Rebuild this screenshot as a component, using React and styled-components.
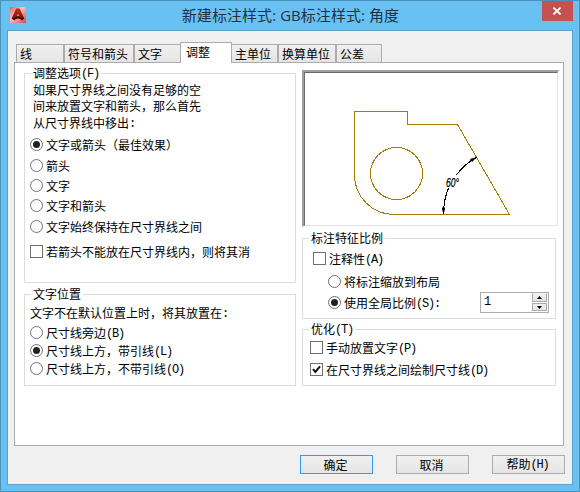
import React, { useState } from "react";
import styled, { createGlobalStyle, css } from "styled-components";

const GlobalStyle = createGlobalStyle`
  * { box-sizing: border-box; }
  body { margin: 0; overflow: hidden; }
`;

const Window = styled.div`
  width: 580px;
  height: 492px;
  display: flex;
  flex-direction: column;
  padding: 0 6px 6px;
  background: #69c0f2;
  border: 1px solid #4b92bb;
  color: #000;
  font: 12px/13px "Noto Sans CJK SC", sans-serif;
`;

const TitleBar = styled.header`
  height: 29px;
  flex: none;
  display: flex;
  align-items: flex-start;
  justify-content: space-between;
`;

const AppIcon = styled.svg`
  width: 16px;
  height: 16px;
  margin: 6px 0 0 3px;
`;

const Title = styled.h1`
  margin: 0 0 0 13px;
  padding-top: 3px;
  font: 15px/22px "Open Sans", "Noto Sans CJK SC", sans-serif;
  letter-spacing: 0.06px;
  color: #25323a;
  white-space: pre;
`;

const CloseButton = styled.button`
  width: 31px;
  height: 20px;
  padding: 0;
  border: 0;
  display: grid;
  place-items: center;
  background: #c75050;
`;

const Client = styled.main`
  height: 455px;
  flex: none;
  background: #f0f0f0;
  border: 1px solid #58a2cd;
`;

const TabRow = styled.nav`
  height: 31px;
  padding: 11px 0 0 8px;
  display: flex;
  align-items: flex-end;
`;

const Tab = styled.button`
  width: ${(p) => p.$width}px;
  height: 18px;
  padding: 0 0 1px 3px;
  border: 1px solid #acacac;
  border-bottom: 0;
  background: linear-gradient(#f0f0f0, #e5e5e5);
  font: inherit;
  color: #000;
  text-align: left;
  white-space: nowrap;
  ${(p) =>
    p.$active &&
    css`
      position: relative;
      height: 21px;
      margin: 0 -1px -1px;
      padding: 0 0 4px 5px;
      background: #fff;
    `}
`;

const TabPanel = styled.div`
  width: 550px;
  height: 384px;
  margin-left: 6px;
  padding: 0 0 0 9px;
  display: flex;
  gap: 6px;
  background: #fff;
  border: 1px solid #acacac;
`;

const Column = styled.div`
  width: ${(p) => p.$width}px;
  padding-top: ${(p) => p.$top}px;
  display: flex;
  flex-direction: column;
`;

const Group = styled.section`
  height: ${(p) => p.$height}px;
  width: ${(p) => p.$width}px;
  margin-top: ${(p) => p.$gap || 0}px;
  padding-left: 5px;
  border: 1px solid #dcdcdc;
`;

const Legend = styled.div`
  width: fit-content;
  height: 13px;
  margin: -7px 0 0 1px;
  padding: 0 2px;
  background: #fff;
  line-height: 11px;
  white-space: nowrap;
`;

const Line = styled.div`
  height: 13px;
  margin: ${(p) => p.$gap}px 0 0 ${(p) => p.$indent || 0}px;
  line-height: 11px;
  white-space: nowrap;
`;

const Option = styled.label`
  height: ${(p) => p.$height || 13}px;
  margin: ${(p) => p.$gap}px 0 0 ${(p) => p.$indent || 0}px;
  display: flex;
  align-items: center;
  gap: 3px;
  white-space: nowrap;
`;

const Latin = styled.span`
  font-family: "Liberation Mono", monospace;
  font-size: 12px;
  line-height: 1;
  letter-spacing: -1.2px;
  vertical-align: 1px;
`;

const RadioMark = styled.span`
  width: 13px;
  height: 13px;
  flex: none;
  display: grid;
  place-items: center;
  border: 1px solid #707070;
  border-radius: 50%;
  background: #fff;

  &::after {
    content: "";
    width: 7px;
    height: 7px;
    border-radius: 50%;
    background: ${(p) => (p.$on ? "#212121" : "transparent")};
  }
`;

const CheckMark = styled.span`
  width: 13px;
  height: 13px;
  flex: none;
  border: 1px solid #707070;
  background: #fff;

  svg { display: block; }
`;

const Preview = styled.div`
  width: 257px;
  height: 157px;
  flex: none;
  border: solid;
  border-width: 2px 1px 1px 2px;
  border-color: #a0a0a0 #fff #fff #a0a0a0;
`;

const PreviewCanvas = styled.svg`
  display: block;
  box-sizing: border-box;
  width: 254px;
  height: 154px;
  border: 1px solid;
  border-color: #696969 #e3e3e3 #e3e3e3 #696969;
`;

const ScaleRow = styled.div`
  display: flex;
  margin-top: 4px;
  padding-right: 6px;
  justify-content: space-between;
`;

const Spinner = styled.div`
  width: 69px;
  height: 21px;
  display: flex;
  justify-content: space-between;
  padding: 0 1px 1px 3px;
  border: 1px solid #abadb3;
`;

const SpinValue = styled(Latin)`
  line-height: 18px;
`;

const SpinButtons = styled.div`
  width: 15px;
  display: grid;
  grid-template-rows: 9px 8px;
  gap: 1px;
`;

const SpinButton = styled.button`
  padding: 0;
  border: 1px solid #acacac;
  border-top-color: ${(p) => (p.$up ? "#f0f0f0" : "#acacac")};
  display: grid;
  place-items: center;
  background: linear-gradient(#f0f0f0, #e5e5e5);
  svg { display: block; }
`;

const ButtonRow = styled.footer`
  display: flex;
  justify-content: flex-end;
  gap: 23px;
  padding: 9px 7px 0 0;
`;

const Button = styled.button`
  width: 73px;
  height: 19px;
  padding: 0 2px 1px 0;
  border: 1px solid ${(p) => (p.$primary ? "#3399ff" : "#acacac")};
  background: linear-gradient(#f0f0f0, #e5e5e5);
  font: inherit;
  color: #000;
`;

/* Renders a label followed by its access key or colon in half-width letters. */
const Text = ({ children, tail }) => (
  <span>
    {children}
    {tail && <Latin>{tail}</Latin>}
  </span>
);

const Radio = ({ on, onSelect, children, tail, ...layout }) => (
  <Option {...layout} onClick={onSelect}>
    <RadioMark $on={on} />
    <Text tail={tail}>{children}</Text>
  </Option>
);

const Check = ({ initial = false, children, tail, ...layout }) => {
  const [on, setOn] = useState(initial);
  return (
    <Option {...layout} onClick={() => setOn(!on)}>
      <CheckMark>
        {on && (
          <svg width="11" height="11">
            <path d="M2 5.2 4.4 8 9 2.4" fill="none" stroke="#111" strokeWidth="2" />
          </svg>
        )}
      </CheckMark>
      <Text tail={tail}>{children}</Text>
    </Option>
  );
};

const TABS = [
  ["线", 48],
  ["符号和箭头", 70],
  ["文字", 47],
  ["调整", 52],
  ["主单位", 47],
  ["换算单位", 58],
  ["公差", 46],
];

const FIT_OPTIONS = [
  ["文字或箭头（最佳效果）", 8],
  ["箭头", 8],
  ["文字", 7],
  ["文字和箭头", 7],
  ["文字始终保持在尺寸界线之间", 8],
];

const PLACEMENTS = [
  ["尺寸线旁边", "(B)", 6],
  ["尺寸线上方，带引线", "(L)", 5],
  ["尺寸线上方，不带引线", "(O)", 5],
];

const Drawing = () => (
  <PreviewCanvas viewBox="305 73 252 152">
    <g fill="none" stroke="#a67c00" shapeRendering="crispEdges">
      <path d="M354.5 175V111.5H407.5V124.5H457.5L509.5 214.5H394A39.5 39.5 0 0 1 354.5 175" />
      <circle cx="396.5" cy="173.5" r="26" />
    </g>
    <g fill="none" stroke="#000" shapeRendering="crispEdges">
      <path d="M476.5 157.3A66 66 0 0 0 456.3 175" />
      <path d="M448.6 188A66 66 0 0 0 443.5 214.5" />
    </g>
    <path d="M477 157 470 159 472 162ZM443.5 214.5 442 209V207.5H445V209Z" />
    <text
      x="446"
      y="187"
      fontFamily="Liberation Sans Narrow, Liberation Sans, sans-serif"
      fontStyle="italic"
      fontSize="12"
      textLength="13"
      lengthAdjust="spacingAndGlyphs"
      stroke="#000"
      strokeWidth="0.25"
    >
      60°
    </text>
  </PreviewCanvas>
);

export default function App() {
  const [tab, setTab] = useState(3);
  const [fit, setFit] = useState(0);
  const [place, setPlace] = useState(1);
  const [scale, setScale] = useState(1);

  return (
    <>
      <GlobalStyle />
      <Window>
        <TitleBar>
          <AppIcon viewBox="0 0 16 16">
            <defs>
              <linearGradient id="tile" x1="0" y1="0" x2="1" y2="1">
                <stop offset="0" stopColor="#ee5a5a" />
                <stop offset="0.4" stopColor="#f8c4c2" />
                <stop offset="1" stopColor="#e04444" />
              </linearGradient>
              <linearGradient id="mark" x1="0" y1="0" x2="0" y2="1">
                <stop offset="0" stopColor="#c92b20" />
                <stop offset="1" stopColor="#6d0e0c" />
              </linearGradient>
            </defs>
            <path fill="url(#tile)" d="M0 0h16v16H0z" />
            <path fill="url(#mark)" d="M6.1 1.6h3.6l4.6 10-2.4 2-2-2.4H6.2l-2 2.4-2.6-2z" />
            <path fill="#d9b0a8" d="M8 6.6 9 9H7z" />
            <path fill="#3c0808" d="M1.7 11.6 8 9.6l6.3 2-2.4 1.2L8 11.2l-3.6 1.6z" />
          </AppIcon>
          <Title>新建标注样式: GB标注样式: 角度</Title>
          <CloseButton aria-label="关闭">
            <svg width="10" height="8" viewBox="0 0 10 8">
              <path d="M1.4.6 8.6 7.4M8.6.6 1.4 7.4" stroke="#fff" strokeWidth="1.8" />
            </svg>
          </CloseButton>
        </TitleBar>

        <Client>
          <TabRow>
            {TABS.map(([label, width], i) => (
              <Tab key={label} $width={width} $active={i === tab} onClick={() => setTab(i)}>
                {label}
              </Tab>
            ))}
          </TabRow>

          <TabPanel>
            <Column $width={272} $top={10}>
              <Group $height={210} $width={272}>
                <Legend><Text tail="(F)">调整选项</Text></Legend>
                <Line $gap={4} $indent={3}>如果尺寸界线之间没有足够的空</Line>
                <Line $gap={3} $indent={3}>间来放置文字和箭头，那么首先</Line>
                <Line $gap={4} $indent={3}><Text tail=":">从尺寸界线中移出</Text></Line>
                {FIT_OPTIONS.map(([label, gap], i) => (
                  <Radio key={label} $gap={gap} on={i === fit} onSelect={() => setFit(i)}>
                    {label}
                  </Radio>
                ))}
                <Check $gap={12}>若箭头不能放在尺寸界线内，则将其消</Check>
              </Group>
              <Group $height={92} $width={272} $gap={11}>
                <Legend>文字位置</Legend>
                <Line $gap={6}><Text tail=":">文字不在默认位置上时，将其放置在</Text></Line>
                {PLACEMENTS.map(([label, tail, gap], i) => (
                  <Radio key={label} $gap={gap} tail={tail} on={i === place} onSelect={() => setPlace(i)}>
                    {label}
                  </Radio>
                ))}
              </Group>
            </Column>

            <Column $width={257} $top={7}>
              <Preview><Drawing /></Preview>
              <Group $height={81} $width={254} $gap={11}>
                <Legend>标注特征比例</Legend>
                <Check $gap={7} $indent={5} tail="(A)">注释性</Check>
                <Radio $gap={10} $indent={20}>将标注缩放到布局</Radio>
                <ScaleRow>
                  <Radio $gap={0} $indent={20} $height={21} on tail="(S):">使用全局比例</Radio>
                  <Spinner>
                    <SpinValue>{scale}</SpinValue>
                    <SpinButtons>
                      <SpinButton $up aria-label="增加" onClick={() => setScale(scale + 1)}>
                        <svg width="5" height="3"><path d="M0 3 2.5 0 5 3z" /></svg>
                      </SpinButton>
                      <SpinButton aria-label="减少" onClick={() => setScale(scale - 1)}>
                        <svg width="5" height="3"><path d="M0 0 2.5 3 5 0z" /></svg>
                      </SpinButton>
                    </SpinButtons>
                  </Spinner>
                </ScaleRow>
              </Group>
              <Group $height={57} $width={254} $gap={10}>
                <Legend><Text tail="(T)">优化</Text></Legend>
                <Check $gap={5} $indent={2} tail="(P)">手动放置文字</Check>
                <Check $gap={9} $indent={2} initial tail="(D)">在尺寸界线之间绘制尺寸线</Check>
              </Group>
            </Column>
          </TabPanel>

          <ButtonRow>
            <Button $primary>确定</Button>
            <Button>取消</Button>
            <Button><Text tail="(H)">帮助</Text></Button>
          </ButtonRow>
        </Client>
      </Window>
    </>
  );
}
